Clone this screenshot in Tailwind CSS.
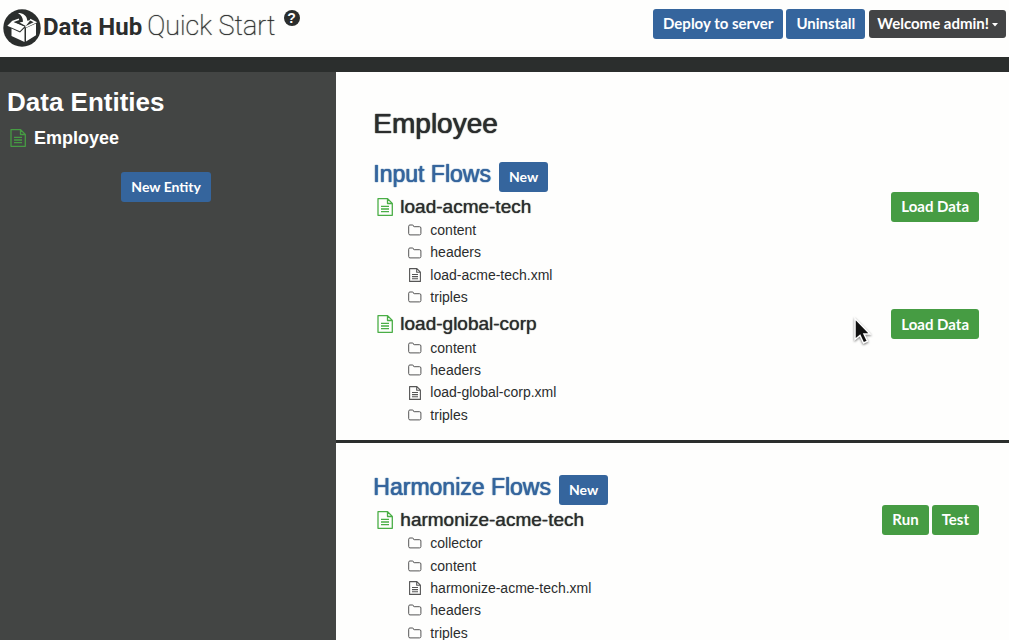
<!DOCTYPE html>
<html lang="en">
<head>
<meta charset="utf-8">
<meta name="viewport" content="width=device-width, initial-scale=1">
<title>Data Hub Quick Start</title>
<script src="https://cdn.jsdelivr.net/npm/@tailwindcss/browser@4"></script>
</head>
<body class="flex h-screen flex-col overflow-hidden bg-[#fefefd] font-['Liberation_Sans',Arial,sans-serif] text-[#2b2d2d]">

<svg class="hidden" aria-hidden="true">
  <symbol id="doc" viewBox="0 0 16 18">
    <path d="M1 .7h9.600L15.300 5.400V17.300H1zM10.500 .7v4.800h4.800M4 8.300h8M4 11h8M4 13.700h8" fill="none" stroke="currentColor" stroke-width="1.300" stroke-linejoin="round"/>
  </symbol>
  <symbol id="file" viewBox="0 0 12 14">
    <path d="M.6 .6h7.300l3.500 3.500v9.300H.6zM7.700 .6v3.700h3.700M3 6.500h6M3 8.600h6M3 10.700h6" fill="none" stroke="currentColor" stroke-width="1.100" stroke-linejoin="round"/>
  </symbol>
  <symbol id="folder" viewBox="0 0 14 12">
    <path d="M.7 2.200Q.7 1 1.900 1H4.400Q5.500 1 5.500 2.100 5.500 2.700 6.200 2.700H11.500Q12.900 2.700 12.900 4V9.600Q12.900 10.900 11.500 10.900H2Q.7 10.900 .7 9.600z" fill="none" stroke="currentColor" stroke-width="1"/>
  </symbol>
</svg>

<header class="flex shrink-0 items-start justify-between border-b-[15px] border-[#2b2e2d] pr-[3px]">
  <div class="flex h-[57px] items-start pl-[3px]">
    <svg class="mt-[9px] size-[38px] shrink-0" viewBox="0 0 38 38" aria-hidden="true">
      <circle cx="19" cy="19" r="18.700" fill="#2b2e2d"/>
      <path d="M8.500 19.500L17 23.500 21.500 19V33L8.500 27zM23 19L33 14.500V26.300L23 32.600z" fill="#fefefd"/>
      <path d="M8.800 12.200L4.300 16.800 16.800 22.300 21.500 17.600z" fill="#fefefd"/>
      <path d="M10.500 12.800L21.500 17.300 18.500 11z" fill="#2b2e2d"/>
      <path d="M9 12.800L16 10.300M27 10.500L32.500 13.300 22.500 18" fill="none" stroke="#fefefd" stroke-width="1.500"/>
      <path d="M15 4C20 4 24 6.500 24.300 11.700L27.500 11 22.800 17 16.500 13.600 20 12.700C20 9 18.500 6 15 4z" fill="#fefefd"/>
    </svg>
    <h1 class="ml-0.5 flex items-baseline gap-[5px] whitespace-nowrap pt-2 leading-9 font-['Roboto',sans-serif]">
      <span class="text-2xl leading-9 font-bold">Data Hub</span>
      <span class="text-[27px] font-thin text-shadow-[0_0_1px_currentColor]">Quick Start</span>
    </h1>
    <button type="button" aria-label="Help" class="ml-2 mt-2.5 size-4 rounded-full bg-[#2b2e2d] text-center text-sm leading-4 font-bold text-white">?</button>
  </div>
  <div class="flex gap-[3px] pt-[9px] font-['Lato',sans-serif] text-[15px] font-bold text-white">
    <button type="button" class="h-[30px] rounded-[3px] bg-[#35659d] px-2.5 pb-0.5">Deploy to server</button>
    <button type="button" class="h-[30px] rounded-[3px] bg-[#35659d] px-2.5 pb-0.5">Uninstall</button>
    <button type="button" class="ml-px mt-px flex h-7 items-center gap-[3px] rounded-[3px] bg-[#434445] px-2 pb-0.5">Welcome admin!<svg class="mt-1 h-1 w-1.5" viewBox="0 0 6 4" aria-hidden="true"><path d="M0 0h6L3 3.500z" fill="currentColor"/></svg></button>
  </div>
</header>

<div class="flex min-h-0 flex-1">
  <aside class="w-1/3 shrink-0 bg-[#434544] pt-3.5 text-white">
    <h2 class="pl-[7px] text-[26px] leading-8 font-bold">Data Entities</h2>
    <a href="#employee" class="mt-2 flex items-center gap-2 pl-2.5 text-lg leading-6 font-bold"><svg class="h-[18px] w-4 text-[#469c43]"><use href="#doc"/></svg>Employee</a>
    <div class="mt-[22px] pr-1 text-center">
      <button type="button" class="h-[30px] rounded-[3px] bg-[#35659d] px-2.5 font-['Lato',sans-serif] text-sm font-bold">New Entity</button>
    </div>
  </aside>

  <main id="employee" class="min-w-0 flex-1 overflow-y-auto [scrollbar-width:none]">
    <section class="border-b-[3px] border-[#2b2e2d] pr-[30px] pb-[13px] pl-[37px]">
      <h2 class="pt-9 text-[28px] leading-8 text-shadow-[0_0_1px_currentColor,0_0_1px_currentColor]">Employee</h2>
      <div class="mt-[22px] flex gap-2">
        <h3 class="text-[23px] leading-6 text-[#35659d] text-shadow-[0_0_1px_currentColor,0_0_1px_currentColor]">Input Flows</h3>
        <button type="button" class="h-[30px] rounded-[3px] bg-[#35659d] px-2.5 font-['Lato',sans-serif] text-sm font-bold text-white">New</button>
      </div>
      <div class="mt-px flex h-[27px] items-center justify-between">
        <h4 class="flex items-center gap-[7px] pl-1 text-[19px] leading-6 text-shadow-[0_0_1px_currentColor]"><svg class="h-[18px] w-4 text-[#4aae46]"><use href="#doc"/></svg>load-acme-tech</h4>
        <button type="button" class="h-[30px] rounded-[3px] bg-[#469c43] px-2.5 font-['Lato',sans-serif] text-[15px] font-bold text-white">Load Data</button>
      </div>
      <ul class="-mt-px pb-0.5 pl-[35px] text-sm leading-[1.6]">
        <li class="flex items-center gap-2"><svg class="h-3 w-3.5 text-[#555]"><use href="#folder"/></svg>content</li>
        <li class="flex items-center gap-2"><svg class="h-3 w-3.5 text-[#555]"><use href="#folder"/></svg>headers</li>
        <li class="flex items-center gap-2"><svg class="h-3.5 w-3.5 text-[#555]"><use href="#file"/></svg>load-acme-tech.xml</li>
        <li class="flex items-center gap-2"><svg class="h-3 w-3.5 text-[#555]"><use href="#folder"/></svg>triples</li>
      </ul>
      <div class="flex h-[27px] items-center justify-between">
        <h4 class="flex items-center gap-[7px] pl-1 text-[19px] leading-6 text-shadow-[0_0_1px_currentColor]"><svg class="h-[18px] w-4 text-[#4aae46]"><use href="#doc"/></svg>load-global-corp</h4>
        <button type="button" class="h-[30px] rounded-[3px] bg-[#469c43] px-2.5 font-['Lato',sans-serif] text-[15px] font-bold text-white">Load Data</button>
      </div>
      <ul class="-mt-px pb-px pl-[35px] text-sm leading-[1.6]">
        <li class="flex items-center gap-2"><svg class="h-3 w-3.5 text-[#555]"><use href="#folder"/></svg>content</li>
        <li class="flex items-center gap-2"><svg class="h-3 w-3.5 text-[#555]"><use href="#folder"/></svg>headers</li>
        <li class="flex items-center gap-2"><svg class="h-3.5 w-3.5 text-[#555]"><use href="#file"/></svg>load-global-corp.xml</li>
        <li class="flex items-center gap-2"><svg class="h-3 w-3.5 text-[#555]"><use href="#folder"/></svg>triples</li>
      </ul>
    </section>
    <section class="pt-8 pr-[30px] pl-[37px]">
      <div class="flex gap-2">
        <h3 class="text-[23px] leading-6 text-[#35659d] text-shadow-[0_0_1px_currentColor,0_0_1px_currentColor]">Harmonize Flows</h3>
        <button type="button" class="h-[30px] rounded-[3px] bg-[#35659d] px-2.5 font-['Lato',sans-serif] text-sm font-bold text-white">New</button>
      </div>
      <div class="mt-px flex h-[27px] items-center justify-between">
        <h4 class="flex items-center gap-[7px] pl-1 text-[19px] leading-6 text-shadow-[0_0_1px_currentColor]"><svg class="h-[18px] w-4 text-[#4aae46]"><use href="#doc"/></svg>harmonize-acme-tech</h4>
        <div class="flex gap-[3px] font-['Lato',sans-serif] text-[15px] font-bold text-white">
          <button type="button" class="h-[30px] rounded-[3px] bg-[#469c43] px-2.5">Run</button>
          <button type="button" class="h-[30px] rounded-[3px] bg-[#469c43] px-2.5">Test</button>
        </div>
      </div>
      <ul class="-mt-px pl-[35px] text-sm leading-[1.6]">
        <li class="flex items-center gap-2"><svg class="h-3 w-3.5 text-[#555]"><use href="#folder"/></svg>collector</li>
        <li class="flex items-center gap-2"><svg class="h-3 w-3.5 text-[#555]"><use href="#folder"/></svg>content</li>
        <li class="flex items-center gap-2"><svg class="h-3.5 w-3.5 text-[#555]"><use href="#file"/></svg>harmonize-acme-tech.xml</li>
        <li class="flex items-center gap-2"><svg class="h-3 w-3.5 text-[#555]"><use href="#folder"/></svg>headers</li>
        <li class="flex items-center gap-2"><svg class="h-3 w-3.5 text-[#555]"><use href="#folder"/></svg>triples</li>
      </ul>
    </section>
  </main>
</div>

<!-- mouse pointer -->
<svg class="pointer-events-none absolute top-[316px] left-[852px] h-8 w-5 drop-shadow-[0_1px_1px_#0008]" viewBox="0 0 20 32" aria-hidden="true">
  <path d="M3 2.500V23.500L8 19.500 11.500 27 15.500 25.200 12 18H18z" fill="#111" stroke="#fff" stroke-width="1.500"/>
</svg>
</body>
</html>
